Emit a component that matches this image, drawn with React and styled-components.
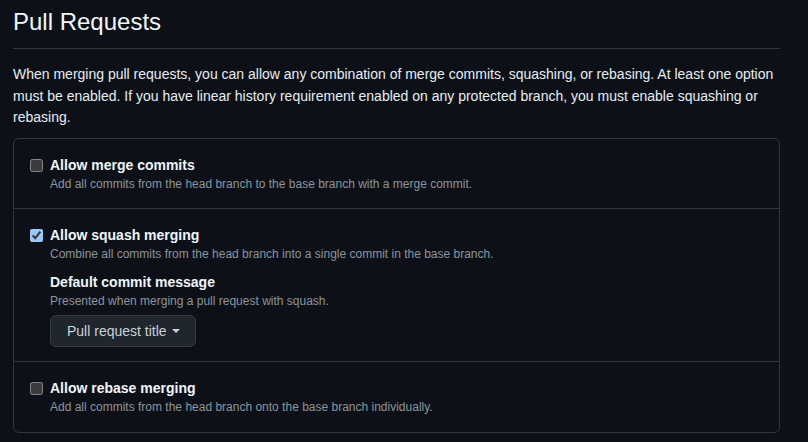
import React from 'react';
import styled, { createGlobalStyle } from 'styled-components';

const Global = createGlobalStyle`
  html, body {
    margin: 0;
    padding: 0;
    background: #0d1117;
    color-scheme: dark;
  }
  body {
    font-family: "Liberation Sans", Arial, sans-serif;
    color: #e6edf3;
    font-size: 14px;
  }
`;

const Page = styled.div`
  padding: 4px 28px 0 13px;
`;

const Heading = styled.h2`
  margin: 0;
  font-size: 24px;
  font-weight: 400;
  line-height: 36px;
  padding-bottom: 8px;
  border-bottom: 1px solid #30363d;
  color: #f0f6fc;
`;

const Intro = styled.p`
  margin: 15px 0 9px;
  line-height: 21.5px;
  color: #e6edf3;
`;

const Box = styled.div`
  border: 1px solid #30363d;
  border-radius: 6px;
`;

const Row = styled.div`
  display: flex;
  gap: 7px;
  padding: 16px 16px ${(p) => p.$bottom || '16px'};
  border-top: ${(p) => (p.$first ? 'none' : '1px solid #30363d')};
`;

const Check = styled.input.attrs({ type: 'checkbox' })`
  margin: 4px 0 0 0;
  width: 13px;
  height: 13px;
  flex: none;
`;

const Body = styled.div`
  display: flex;
  flex-direction: column;
`;

const Title = styled.div`
  font-weight: 700;
  line-height: 20px;
  color: #f0f6fc;
`;

const Note = styled.div`
  font-size: 12px;
  line-height: 18px;
  color: #8b949e;
`;

const SubTitle = styled(Title)`
  margin-top: 9px;
`;

const Select = styled.button`
  align-self: flex-start;
  margin-top: 5px;
  height: 32px;
  padding: 0 15px 0 16px;
  display: flex;
  align-items: center;
  gap: 5px;
  font-family: inherit;
  font-size: 14px;
  color: #c9d1d9;
  background: #21262d;
  border: 1px solid #363b42;
  border-radius: 6px;
`;

const Caret = styled.span`
  width: 0;
  height: 0;
  border-left: 4px solid transparent;
  border-right: 4px solid transparent;
  border-top: 4px solid #c9d1d9;
  margin-top: 1px;
`;

export default function App() {
  return (
    <Page>
      <Global />
      <Heading>Pull Requests</Heading>
      <Intro>
        When merging pull requests, you can allow any combination of merge commits, squashing, or rebasing. At least one
        option must be enabled. If you have linear history requirement enabled on any protected branch, you must enable
        squashing or rebasing.
      </Intro>
      <Box>
        <Row $first $bottom="15px">
          <Check />
          <Body>
            <Title>Allow merge commits</Title>
            <Note>Add all commits from the head branch to the base branch with a merge commit.</Note>
          </Body>
        </Row>
        <Row $bottom="14px">
          <Check defaultChecked />
          <Body>
            <Title>Allow squash merging</Title>
            <Note>Combine all commits from the head branch into a single commit in the base branch.</Note>
            <SubTitle>Default commit message</SubTitle>
            <Note>Presented when merging a pull request with squash.</Note>
            <Select>
              Pull request title
              <Caret />
            </Select>
          </Body>
        </Row>
        <Row>
          <Check />
          <Body>
            <Title>Allow rebase merging</Title>
            <Note>Add all commits from the head branch onto the base branch individually.</Note>
          </Body>
        </Row>
      </Box>
    </Page>
  );
}
